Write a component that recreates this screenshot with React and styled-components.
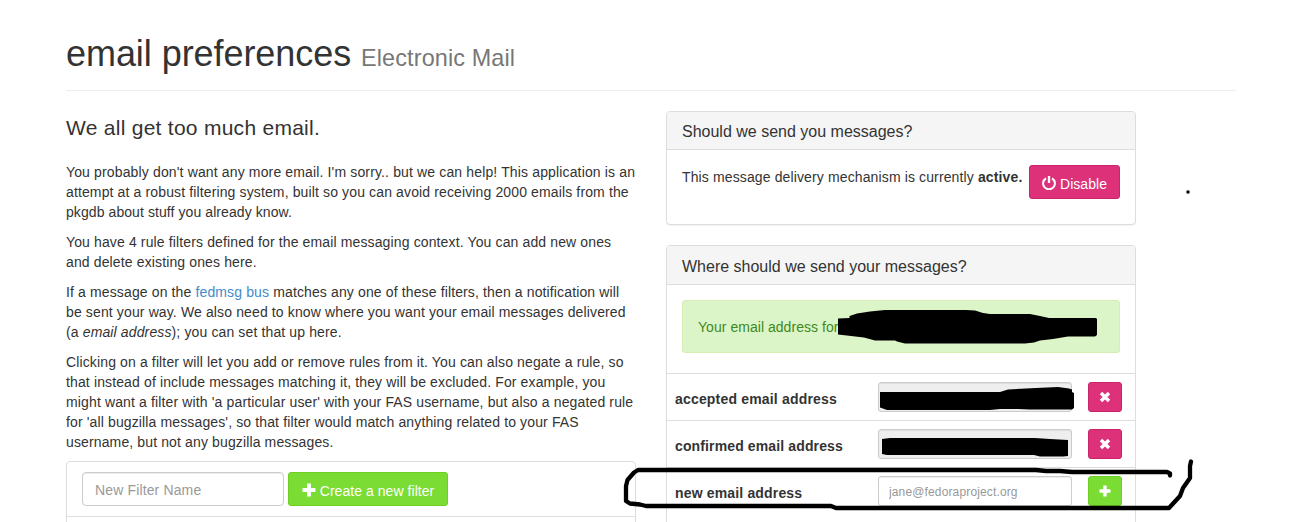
import React from "react";
import styled, { createGlobalStyle, css } from "styled-components";

const GlobalStyle = createGlobalStyle`
  * { box-sizing: border-box; }
  body {
    margin: 0;
    background: #fff;
    color: #333;
    font: 14px/20px "Liberation Sans", Arial, sans-serif;
    overflow: hidden;
  }
  input, button { font-family: inherit; }
`;

const Page = styled.div`
  position: relative;
  width: 1300px;
  height: 522px;
  overflow: hidden;
  padding: 34px 64px 0 66px;
`;

const PageHeader = styled.header`
  height: 57px;
  border-bottom: 1px solid #eee;
`;

const Title = styled.h1`
  margin: 0;
  font-size: 36px;
  line-height: 40px;
  font-weight: normal;
  white-space: nowrap;
  letter-spacing: -0.06px;
`;

const Subtitle = styled.small`
  font-size: 23.4px;
  line-height: 1;
  color: #777;
  letter-spacing: 0.13px;
`;

const Columns = styled.main`
  display: grid;
  grid-template-columns: 570px 470px;
  column-gap: 30px;
  padding-top: 20px;
`;

const Lead = styled.h2`
  margin: 5px 0 22px;
  font-size: 21px;
  line-height: 24px;
  font-weight: normal;
  letter-spacing: 0.27px;
`;

const Paragraph = styled.p`
  margin: 0 0 10px;
  &:last-of-type { margin-bottom: 9px; }
`;

const Line = styled.span`
  display: block;
  white-space: nowrap;
  letter-spacing: ${(p) => p.$track || 0.13}px;
`;

const Link = styled.a`
  color: #428bca;
  text-decoration: none;
`;

const Panel = styled.section`
  margin-bottom: 20px;
  background: #fff;
  border: 1px solid #ddd;
  border-radius: 4px;
  box-shadow: 0 1px 1px rgba(0, 0, 0, 0.05);
`;

const PanelHeading = styled.h3`
  margin: 0;
  padding: ${(p) => (p.$tall ? 11 : 10)}px 15px 8px;
  font-size: 16px;
  line-height: 19px;
  font-weight: normal;
  background: #f5f5f5;
  border-bottom: 1px solid #ddd;
  border-radius: 3px 3px 0 0;
`;

const StatusBody = styled.div`
  display: flex;
  justify-content: space-between;
  align-items: flex-start;
  height: 74px;
  padding: 15px;
`;

const StatusText = styled.p`
  margin: 2px 0 0;
  white-space: nowrap;
  letter-spacing: 0.127px;
`;

const tones = {
  green: css`background: #7bdc33; border-color: #6ed023;`,
  pink: css`background: #dd3279; border-color: #c9246a;`,
};

const Button = styled.button`
  display: flex;
  align-items: center;
  justify-content: center;
  gap: 4px;
  flex: none;
  width: ${(p) => p.$width}px;
  height: ${(p) => (p.$small ? 30 : 34)}px;
  padding: ${(p) => (p.$small ? "2px 0 0" : "3px 0 0")};
  color: #fff;
  font-size: 14px;
  line-height: 20px;
  white-space: nowrap;
  letter-spacing: 0.05px;
  border: 1px solid;
  border-radius: 3px;
  ${(p) => tones[p.$tone]}
  svg { display: block; margin-top: -2px; }
`;

const Input = styled.input`
  width: ${(p) => p.$width}px;
  height: ${(p) => (p.$small ? 30 : 34)}px;
  padding: ${(p) => (p.$small ? "3px 10px 1px" : "2px 12px 0")};
  font-size: ${(p) => (p.$small ? 12 : 14)}px;
  letter-spacing: 0.14px;
  border: 1px solid #ccc;
  border-radius: ${(p) => (p.$small ? 3 : 4)}px;
  background: ${(p) => (p.disabled ? "#eee" : "#fff")};
  box-shadow: inset 0 1px 1px rgba(0, 0, 0, 0.075);
  &::placeholder { color: #999; opacity: 1; }
`;

const FilterPanel = styled(Panel)`
  height: 100px;
  border-radius: 4px 4px 0 0;
`;

const FilterForm = styled.form`
  display: flex;
  gap: 4px;
  padding: 10px 15px;
  border-bottom: 1px solid #ddd;
`;

const Alert = styled.div`
  height: 53px;
  margin: 15px 15px 20px;
  padding: 16px 15px;
  color: #3f8a1b;
  background: #dcf5c8;
  border: 1px solid #d5efb5;
  border-radius: 3px;
  white-space: nowrap;
  letter-spacing: 0.04px;
`;

const AddressRow = styled.div`
  display: grid;
  grid-template-columns: 203px 194px 34px;
  height: 47px;
  padding: 8px;
  border-top: 1px solid #ddd;
  & > :last-child { margin-left: 16px; }
  &:last-child { height: 80px; }
`;

const AddressLabel = styled.label`
  padding-top: 7px;
  font-weight: bold;
  white-space: nowrap;
  letter-spacing: ${(p) => p.$track}px;
`;

const Markup = styled.svg`
  position: absolute;
  inset: 0;
  pointer-events: none;
`;

const PlusIcon = ({ size = 14 }) => (
  <svg width={size} height={size} viewBox="0 0 14 14" fill="#fff">
    <path d="M5.500 0.500h3q.5 0 .5.500V5h4q.5 0 .5.500v3q0 .5-.5.500H9v4q0 .5-.5.500h-3q-.5 0-.5-.5V9H1q-.5 0-.5-.5v-3q0-.5.500-.5H5V1q0-.5.500-.5z" />
  </svg>
);

const RemoveIcon = () => (
  <svg width="12" height="12" viewBox="0 0 12 12" fill="none" stroke="#fff" strokeWidth="3.400">
    <path d="M2 2l8 8M10 2l-8 8" />
  </svg>
);

const PowerIcon = () => (
  <svg width="14" height="14" viewBox="0 0 14 14" fill="none" stroke="#fff" strokeWidth="2">
    <path d="M4 2.300A5.900 5.900 0 1 0 10 2.300" />
    <path d="M7 0v7" strokeWidth="2.300" />
  </svg>
);

const rows = [
  { label: "accepted email address", track: 0.18 },
  { label: "confirmed email address", track: 0.13 },
  { label: "new email address", track: 0.16, placeholder: "jane@fedoraproject.org" },
];

export default function App() {
  return (
    <Page>
      <GlobalStyle />
      <PageHeader>
        <Title>email preferences <Subtitle>Electronic Mail</Subtitle></Title>
      </PageHeader>
      <Columns>
        <div>
          <Lead>We all get too much email.</Lead>
          <Paragraph>
            <Line $track={0.143}>You probably don't want any more email. I'm sorry.. but we can help! This application is an</Line>
            <Line>attempt at a robust filtering system, built so you can avoid receiving 2000 emails from the</Line>
            <Line $track={0.08}>pkgdb about stuff you already know.</Line>
          </Paragraph>
          <Paragraph>
            <Line>You have 4 rule filters defined for the email messaging context. You can add new ones</Line>
            <Line>and delete existing ones here.</Line>
          </Paragraph>
          <Paragraph>
            <Line>If a message on the <Link>fedmsg bus</Link> matches any one of these filters, then a notification will</Line>
            <Line>be sent your way. We also need to know where you want your email messages delivered</Line>
            <Line>(a <em>email address</em>); you can set that up here.</Line>
          </Paragraph>
          <Paragraph>
            <Line>Clicking on a filter will let you add or remove rules from it. You can also negate a rule, so</Line>
            <Line>that instead of include messages matching it, they will be excluded. For example, you</Line>
            <Line $track={0.136}>might want a filter with 'a particular user' with your FAS username, but also a negated rule</Line>
            <Line>for 'all bugzilla messages', so that filter would match anything related to your FAS</Line>
            <Line>username, but not any bugzilla messages.</Line>
          </Paragraph>
          <FilterPanel>
            <FilterForm>
              <Input $width={202} placeholder="New Filter Name" />
              <Button type="button" $tone="green" $width={160}><PlusIcon />Create a new filter</Button>
            </FilterForm>
          </FilterPanel>
        </div>
        <div>
          <Panel>
            <PanelHeading>Should we send you messages?</PanelHeading>
            <StatusBody>
              <StatusText>This message delivery mechanism is currently <b>active.</b></StatusText>
              <Button $tone="pink" $width={91}><PowerIcon />Disable</Button>
            </StatusBody>
          </Panel>
          <Panel>
            <PanelHeading $tall>Where should we send your messages?</PanelHeading>
            <Alert>Your email address for</Alert>
            {rows.map((row) => (
              <AddressRow key={row.label}>
                <AddressLabel $track={row.track}>{row.label}</AddressLabel>
                <Input $small $width={194} disabled={!row.placeholder} placeholder={row.placeholder} />
                <Button $small $width={34} $tone={row.placeholder ? "green" : "pink"}>
                  {row.placeholder ? <PlusIcon size={12} /> : <RemoveIcon />}
                </Button>
              </AddressRow>
            ))}
          </Panel>
        </div>
      </Columns>
      <Markup width="1300" height="522" viewBox="0 0 1300 522" fill="#000">
        <path d="M838 318.500L849.500 318V316L857 313.500L870 311.500L885 310H966L975 310.500L983 313L990 314H1030L1040 316L1049 318H1096L1097 319V335L1095 336.500H1068L1053 339L1040 340.500L1034 342.500L1025 343.500H905L897 341.500L895 340.500H875L864 337.500L838 334.500Z" />
        <path d="M880 392H1000L1008 389.500L1036 388L1058 387L1069 388.500L1072 389.500V392L1074 393V408L1072 409.500H1030L1018 409H1000L990 410H887L880 407.500Z" />
        <path d="M882 439L890 438H1035L1050 439L1068 440V456L1063 456.500H1040L1034 455H887L882 454Z" />
        <path
          d="M1170 475.500L1170 473.500L1167 472H1072L1060 471H1046L1036 470H638L634 472.500L627.500 480L626 486V501L630 503.500L640 504.500L646 506H831L836 508H1169L1180 496L1183 488L1190 478V466L1191 461.500"
          fill="none"
          stroke="#000"
          strokeWidth="4.300"
          strokeLinecap="round"
          strokeLinejoin="round"
        />
        <rect x="1186.500" y="190.500" width="3" height="3" />
      </Markup>
    </Page>
  );
}
